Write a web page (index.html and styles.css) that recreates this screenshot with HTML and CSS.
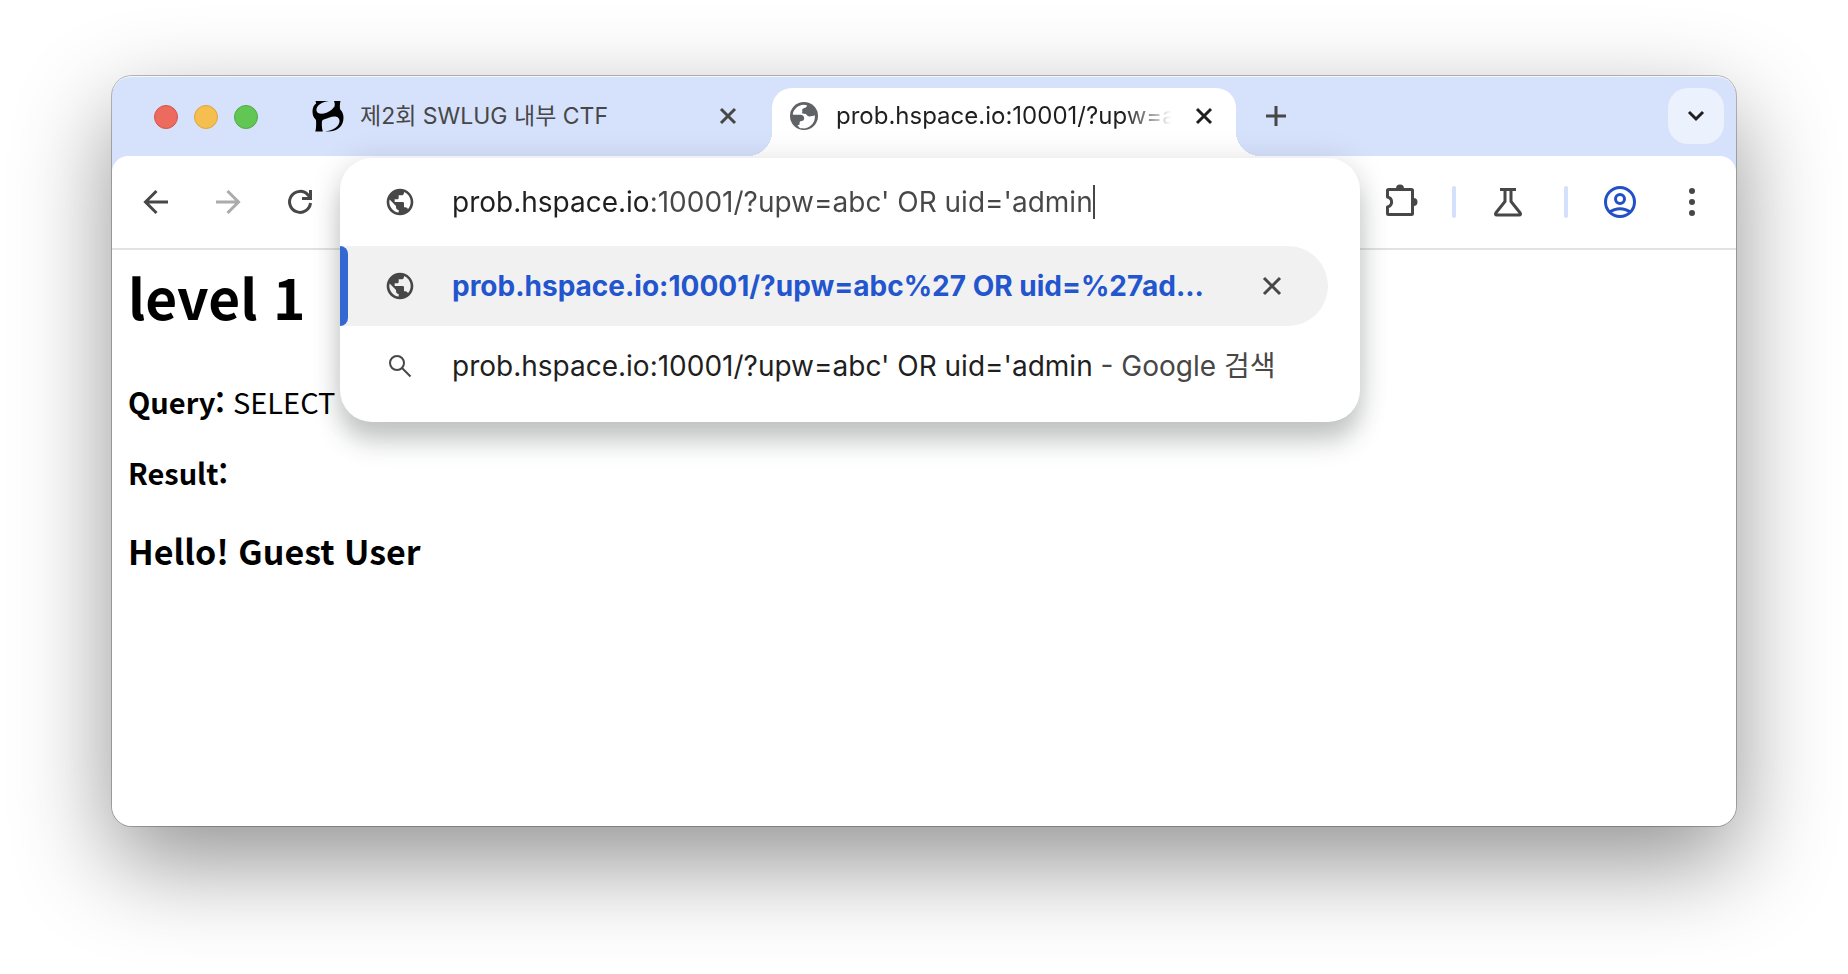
FILE: index.html
```html
<!DOCTYPE html>
<html lang="ko">
<head>
    <meta charset="UTF-8">
    <meta name="viewport" content="width=device-width, initial-scale=1.0">
    <title>level 1</title>
    <link rel="stylesheet" href="styles.css">
</head>
<body>
    <div class="window">
        <header class="tab-strip">
            <div class="lights">
                <button class="light red" aria-label="Close window"></button>
                <button class="light yellow" aria-label="Minimize window"></button>
                <button class="light green" aria-label="Zoom window"></button>
            </div>

            <div class="tab">
                <svg class="icon" viewBox="0 0 32 32">
                    <path d="M3.500 1H17C9 2 4 6 4.500 10.500c.5 3.500 5 4 10 2.200C19 11 21 8.500 22.500 6.500c.5-2 .3-3.500-.5-5.500h6.500c-.8 3-.8 6-.3 8.500 2 2 3.300 4.500 3.300 8 0 8-5 14-16 14H28.500V31.500H13c8-1 14.500-5 14.500-10.500 0-4.500-5-5.500-10-3.500-4 1.500-7 2-7.500 3.500-.5 4 0 7.500.8 10.500H3.300c1-3.500 1-8 .7-11.500C1.500 17.500.5 15 .5 11.500.5 7.500 2 5 4.200 3.500z"/>
                </svg>
                <span class="tab-title">제2회 SWLUG 내부 CTF</span>
                <button class="tab-close" aria-label="Close tab">
                    <svg viewBox="0 0 32 32"><path d="M9 9l14 14M23 9L9 23"/></svg>
                </button>
            </div>

            <div class="tab active">
                <svg class="icon" viewBox="0 0 32 32">
                    <circle cx="16" cy="16" r="14" fill="#5f6368"/>
                    <path fill="#fff" d="M4.700 14.500C5.500 9.500 10 5 15.500 4.800l3.500.4c-.2 1.600-1 2.400-2.800 2.800-1.600.4-2.200 1.400-2 2.600.2 1 .2 1.800-.4 2.600 1.400.4 3 .4 4.200.8.8 1.600 2 2.400 3.600 2.400 1.800 0 3.600-.6 5.200-1.200.8 6-3.200 12-10.200 13.200l-1.600-.2H12l-3-3.400 1-8z"/>
                    <path fill="#5f6368" d="M4 14.800h8.500c2 0 3.700 1.300 3.700 3.500 0 1.600-1 2.600-2.600 2.800-1.600.1-2 .7-2 2v1.500L8 26z"/>
                </svg>
                <span class="tab-title">prob.hspace.io:10001/?upw=abc' OR uid='admin</span>
                <button class="tab-close" aria-label="Close tab">
                    <svg viewBox="0 0 32 32"><path d="M9 9l14 14M23 9L9 23"/></svg>
                </button>
            </div>

            <button class="new-tab" aria-label="New tab">
                <svg class="icon" viewBox="0 0 32 32"><path d="M16 6v20M6 16h20"/></svg>
            </button>
            <button class="tab-search" aria-label="Search tabs">
                <svg class="icon" viewBox="0 0 32 32"><path d="M9 12l7 7 7-7"/></svg>
            </button>
        </header>

        <nav class="toolbar">
            <button class="tool" aria-label="Back">
                <svg class="icon line" viewBox="0 0 32 32"><path d="M28 16H6M16.500 5L5.500 16l11 11"/></svg>
            </button>
            <button class="tool" aria-label="Forward" disabled>
                <svg class="icon line" viewBox="0 0 32 32"><path d="M4 16h22M15.500 5l11 11-11 11"/></svg>
            </button>
            <button class="tool" aria-label="Reload">
                <svg class="icon line" viewBox="0 0 32 32"><path d="M26.500 17A10.500 10.500 0 1 1 24 9l2.500 3.500M26.500 4v8.500H18"/></svg>
            </button>

            <div class="omnibox">
                <div class="popup">
                    <div class="address">
                        <svg class="icon" viewBox="0 0 24 24"><path d="M12 2C6.480 2 2 6.480 2 12s4.480 10 10 10 10-4.480 10-10S17.520 2 12 2zm-1 17.930c-3.950-.49-7-3.850-7-7.930 0-.62.080-1.210.210-1.790L9 15v1c0 1.100.9 2 2 2v1.930zm6.900-2.540c-.26-.81-1-1.390-1.900-1.390h-1v-3c0-.55-.45-1-1-1H8v-2h2c.55 0 1-.45 1-1V7h2c1.100 0 2-.9 2-2v-.41c2.930 1.190 5 4.060 5 7.410 0 2.080-.8 3.970-2.100 5.390z"/></svg>
                        <input class="address-input" type="text" aria-label="Address" value="prob.hspace.io:10001/?upw=abc' OR uid='admin" spellcheck="false">
                        <span class="caret"></span>
                    </div>
                    <ul class="suggestions">
                        <li class="suggestion selected">
                            <svg class="icon" viewBox="0 0 24 24"><path d="M12 2C6.480 2 2 6.480 2 12s4.480 10 10 10 10-4.480 10-10S17.520 2 12 2zm-1 17.930c-3.950-.49-7-3.850-7-7.930 0-.62.080-1.210.210-1.790L9 15v1c0 1.100.9 2 2 2v1.930zm6.900-2.540c-.26-.81-1-1.390-1.900-1.390h-1v-3c0-.55-.45-1-1-1H8v-2h2c.55 0 1-.45 1-1V7h2c1.100 0 2-.9 2-2v-.41c2.930 1.190 5 4.060 5 7.410 0 2.080-.8 3.970-2.100 5.390z"/></svg>
                            <a class="suggestion-text" href="#">prob.hspace.io:10001/?upw=abc%27 OR uid=%27ad...</a>
                            <button class="remove" aria-label="Remove suggestion">
                                <svg class="icon line" viewBox="0 0 32 32"><path d="M8 8l16 16M24 8L8 24"/></svg>
                            </button>
                        </li>
                        <li class="suggestion">
                            <svg class="icon thin" viewBox="0 0 32 32"><circle cx="13" cy="13" r="7"/><path d="M18 18l8.500 8.500"/></svg>
                            <a class="suggestion-text" href="#">prob.hspace.io:10001/?upw=abc' OR uid='admin <span class="engine">- Google 검색</span></a>
                        </li>
                    </ul>
                </div>
            </div>

            <button class="tool" aria-label="Extensions">
                <svg class="icon puzzle" viewBox="0 0 32 32">
                    <path fill="none" stroke="currentColor" stroke-width="3" stroke-linejoin="round" d="M3.500 4.500a1 1 0 0 1 1-1h23a1 1 0 0 1 1 1v23a1 1 0 0 1-1 1h-23a1 1 0 0 1-1-1v-6.500c5.500-1.500 5.500-8.500 0-10z"/>
                    <path d="M12 2.500a4 4 0 0 1 8 0zM29.500 12a4 4 0 0 1 0 8z"/>
                </svg>
            </button>
            <span class="divider"></span>
            <button class="tool" aria-label="Labs">
                <svg class="icon line" viewBox="0 0 32 32"><path d="M8 3.500h16M13 4v11.500L3.800 27c-.8 1.200-.2 2 1 2h22.400c1.200 0 1.800-.8 1-2L19 15.500V4"/></svg>
            </button>
            <span class="divider wide"></span>
            <button class="tool profile" aria-label="Profile">
                <svg class="icon line" viewBox="0 0 32 32"><circle cx="16" cy="16" r="14.500"/><circle cx="16" cy="13" r="4.500"/><path d="M6 26c5.500-4.500 14.500-4.500 20 0"/></svg>
            </button>
            <button class="tool" aria-label="Menu">
                <svg class="icon" viewBox="0 0 32 32"><circle cx="16" cy="5" r="3"/><circle cx="16" cy="16" r="3"/><circle cx="16" cy="27" r="3"/></svg>
            </button>
        </nav>

        <main class="page">
            <h1>level 1</h1>
            <p><strong>Query:</strong> SELECT</p>
            <p><strong>Result:</strong></p>
            <h2>Hello! Guest User</h2>
        </main>
    </div>
</body>
</html>
```
FILE: styles.css
```css
* {
    margin: 0;
    padding: 0;
    box-sizing: border-box;
}

body {
    font-family: Inter, "Noto Sans CJK KR", sans-serif;
    background: #fff;
    color: #1f1f1f;
    min-height: 100vh;
    padding: 76px 112px 148px;
    display: flex;
}

button {
    background: none;
    border: none;
    color: inherit;
    display: flex;
    align-items: center;
    justify-content: center;
    flex: none;
}

.window {
    flex: 1;
    min-width: 0;
    display: flex;
    flex-direction: column;
    background: #d6e1fc;
    border-radius: 20px;
    box-shadow: 0 0 0 1px rgba(0, 0, 0, 0.25), 0 36px 96px rgba(0, 0, 0, 0.43);
}

.icon {
    width: 32px;
    height: 32px;
    flex: none;
    fill: currentColor;
}

.line {
    fill: none;
    stroke: currentColor;
    stroke-width: 3;
}

.thin {
    fill: none;
    stroke: currentColor;
    stroke-width: 2;
}

/* Tabs */
.tab-strip {
    display: flex;
    align-items: flex-start;
    gap: 12px;
    height: 80px;
    padding: 12px 12px 0;
    border-radius: 20px 20px 0 0;
    box-shadow: inset 0 2px 0 -1px #f2f6fe;
}

.lights {
    display: flex;
    gap: 16px;
    padding: 17px 26px 0 30px;
}

.light {
    width: 24px;
    height: 24px;
    border-radius: 50%;
}

.red {
    background: #ed6a5e;
    border: 1px solid #d5544a;
}

.yellow {
    background: #f5bf4f;
    border: 1px solid #dda53c;
}

.green {
    background: #62c655;
    border: 1px solid #4fab43;
}

.tab {
    position: relative;
    display: flex;
    align-items: center;
    gap: 16px;
    flex: 0 1 464px;
    min-width: 0;
    height: 68px;
    padding: 0 16px 12px;
    border-radius: 20px 20px 0 0;
}

.tab .icon {
    color: #000;
}

.tab-title {
    flex: 1;
    min-width: 0;
    overflow: hidden;
    white-space: nowrap;
    font-size: 23px;
    line-height: 32px;
    color: #474747;
}

.tab-close {
    width: 32px;
    height: 32px;
    color: #474747;
}

.tab-close svg {
    width: 32px;
    height: 32px;
    stroke: currentColor;
    stroke-width: 3;
}

.active {
    background: #fff;
}

.active .tab-title {
    font-size: 24px;
    color: #1f1f1f;
    -webkit-mask-image: linear-gradient(to left, transparent, #000 48px);
    mask-image: linear-gradient(to left, transparent, #000 48px);
}

.active .tab-close {
    color: #1f1f1f;
}

.active::before,
.active::after {
    content: "";
    position: absolute;
    bottom: 0;
    width: 24px;
    height: 24px;
}

.active::before {
    right: 100%;
    background: radial-gradient(circle at 0 0, transparent 24px, #fff 24px);
}

.active::after {
    left: 100%;
    background: radial-gradient(circle at 100% 0, transparent 24px, #fff 24px);
}

.new-tab {
    width: 56px;
    height: 56px;
    color: #474747;
}

.new-tab svg {
    stroke: currentColor;
    stroke-width: 3;
}

.tab-search {
    width: 56px;
    height: 56px;
    margin-left: auto;
    border-radius: 20px;
    background: #ebf2fd;
}

.tab-search svg {
    fill: none;
    stroke: currentColor;
    stroke-width: 3;
}

/* Toolbar */
.toolbar {
    position: relative;
    display: flex;
    align-items: center;
    gap: 8px;
    height: 94px;
    padding: 0 12px 2px;
    background: #fff;
    border-radius: 16px 16px 0 0;
    box-shadow: inset 0 -2px 0 #e1e3e1;
    color: #474747;
}

.tool {
    width: 64px;
    height: 64px;
}

.tool:disabled {
    color: #ababab;
}

.puzzle {
    overflow: visible;
}

.profile {
    color: #2250c6;
}

.divider {
    width: 4px;
    height: 32px;
    margin: 0 12px;
    border-radius: 2px;
    background: #d3e1fd;
}

.wide {
    margin-left: 16px;
}

/* Address bar */
.omnibox {
    position: relative;
    flex: 1;
    align-self: stretch;
}

.popup {
    position: absolute;
    top: 2px;
    left: 0;
    right: 0;
    padding-bottom: 16px;
    background: #fff;
    border-radius: 32px;
    box-shadow: 0 0 32px rgba(0, 0, 0, 0.1), 0 20px 24px rgba(50, 60, 58, 0.25);
    font-size: 28px;
    line-height: 40px;
}

.address {
    display: flex;
    align-items: center;
    height: 88px;
    padding-left: 44px;
}

/* Host is darker than the rest of the URL */
.address-input {
    field-sizing: content;
    margin-left: 36px;
    border: none;
    outline: none;
    font: inherit;
    color: transparent;
    background: linear-gradient(to right, #1f1f1f 196px, #474747 196px);
    -webkit-background-clip: text;
    background-clip: text;
}

.caret {
    width: 2px;
    height: 34px;
    background: #474747;
}

.suggestions {
    list-style: none;
}

.suggestion {
    display: flex;
    align-items: center;
    height: 80px;
    margin-right: 32px;
    padding: 0 40px 0 44px;
    gap: 36px;
}

.selected {
    position: relative;
    background: #f1f1f1;
    border-radius: 0 40px 40px 0;
}

.selected::before {
    content: "";
    position: absolute;
    left: 0;
    top: 0;
    bottom: 0;
    width: 8px;
    border-radius: 0 8px 8px 0;
    background: #3367d1;
}

.suggestion-text {
    flex: 1;
    min-width: 0;
    overflow: hidden;
    white-space: nowrap;
    color: #1f1f1f;
    text-decoration: none;
}

.selected .suggestion-text {
    font-weight: 700;
    color: #2355ce;
}

.engine {
    color: #474747;
}

.remove {
    width: 32px;
    height: 32px;
}

/* Page */
.page {
    flex: 1;
    padding: 16px;
    background: #fff;
    border-radius: 0 0 20px 20px;
    font-family: "Noto Sans CJK KR", sans-serif;
    font-size: 29px;
    line-height: 40px;
    color: #000;
}

.page h1 {
    font-size: 55px;
    line-height: 60px;
    margin-bottom: 55px;
}

.page p {
    margin-bottom: 31px;
}

.page h2 {
    margin-top: 35px;
    font-size: 34px;
    line-height: 48px;
}
```
